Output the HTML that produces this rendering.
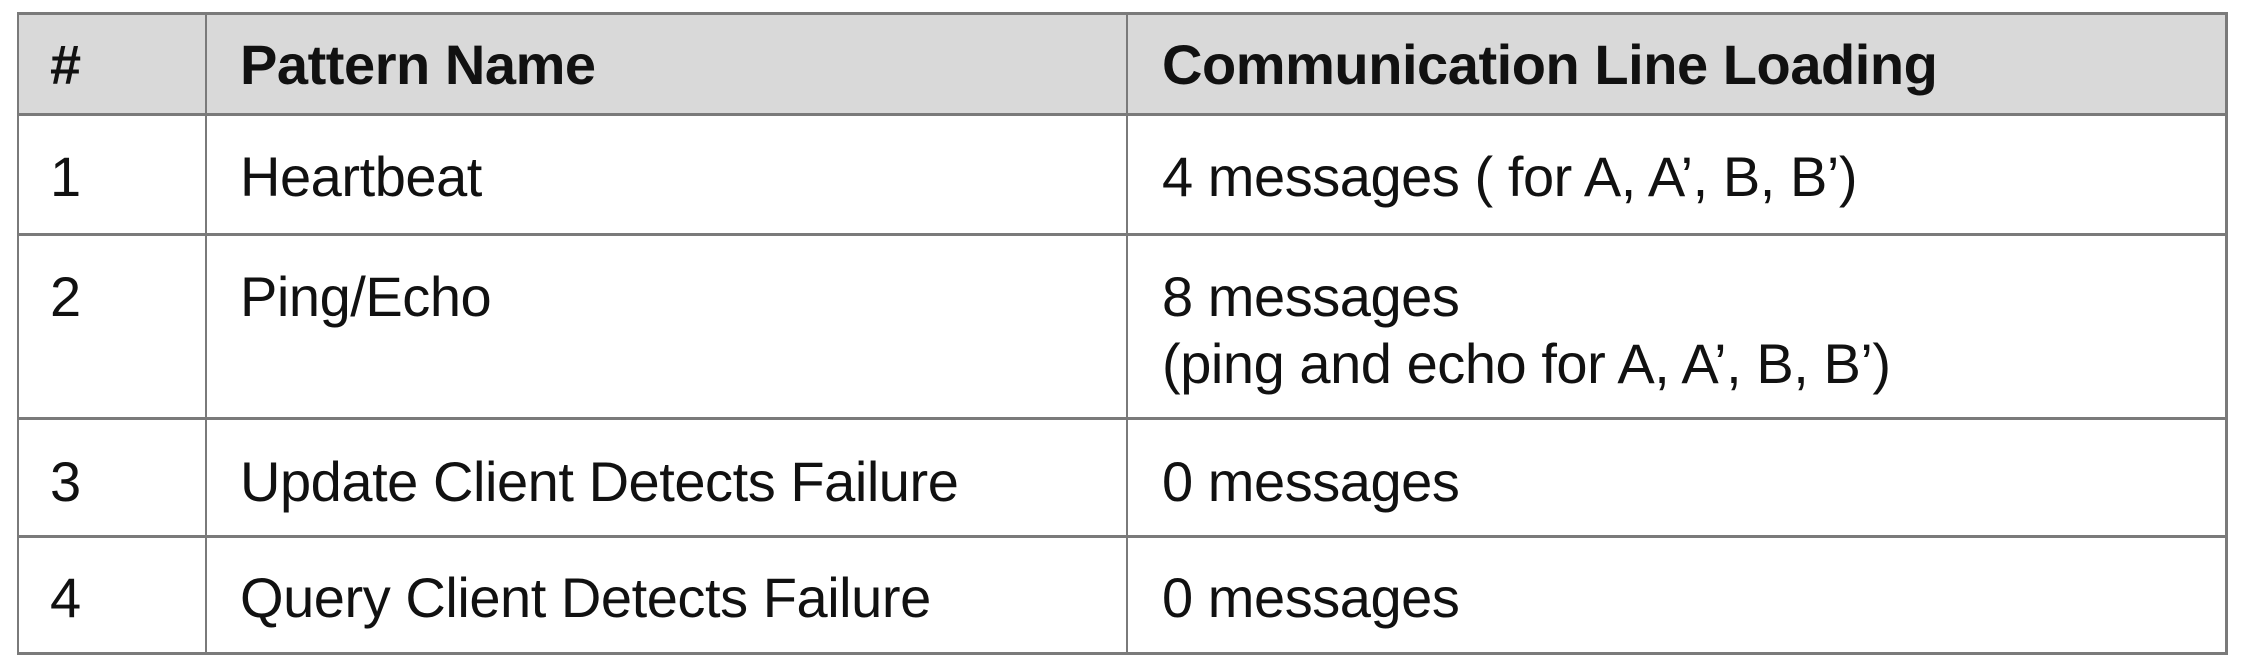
<!DOCTYPE html>
<html><head><meta charset="utf-8"><style>
html,body{margin:0;padding:0;background:#fff;width:2241px;height:672px;overflow:hidden;position:relative}
.l{position:absolute;background:#7a7a7a}
.t{position:absolute;font-family:"Liberation Sans",Arial,sans-serif;font-size:56px;color:#111;white-space:nowrap;line-height:1;letter-spacing:-0.45px}
.b{font-weight:bold}
</style></head><body>
<div style="position:absolute;left:18px;top:13px;width:2208px;height:101px;background:#d9d9d9"></div>
<div class="l" style="left:17px;top:12px;width:2211px;height:3px"></div>
<div class="l" style="left:17px;top:113px;width:2211px;height:3px"></div>
<div class="l" style="left:17px;top:233px;width:2211px;height:3px"></div>
<div class="l" style="left:17px;top:417px;width:2211px;height:3px"></div>
<div class="l" style="left:17px;top:535px;width:2211px;height:3px"></div>
<div class="l" style="left:17px;top:652px;width:2211px;height:3px"></div>
<div class="l" style="left:17px;top:12px;width:2px;height:643px"></div>
<div class="l" style="left:205px;top:12px;width:2px;height:643px"></div>
<div class="l" style="left:1126px;top:12px;width:2px;height:643px"></div>
<div class="l" style="left:2225px;top:12px;width:3px;height:643px"></div>

<div class="t b" style="left:50px;top:37px">#</div>
<div class="t b" style="left:240px;top:37px">Pattern Name</div>
<div class="t b" style="left:1162px;top:37px">Communication Line Loading</div>

<div class="t" style="left:50px;top:149px">1</div>
<div class="t" style="left:240px;top:149px">Heartbeat</div>
<div class="t" style="left:1162px;top:149px">4 messages ( for A, A’, B, B’)</div>

<div class="t" style="left:50px;top:269px">2</div>
<div class="t" style="left:240px;top:269px">Ping/Echo</div>
<div class="t" style="left:1162px;top:269px">8 messages</div>
<div class="t" style="left:1162px;top:336px">(ping and echo for A, A’, B, B’)</div>

<div class="t" style="left:50px;top:454px">3</div>
<div class="t" style="left:240px;top:454px">Update Client Detects Failure</div>
<div class="t" style="left:1162px;top:454px">0 messages</div>

<div class="t" style="left:50px;top:570px">4</div>
<div class="t" style="left:240px;top:570px">Query Client Detects Failure</div>
<div class="t" style="left:1162px;top:570px">0 messages</div>
</body></html>
